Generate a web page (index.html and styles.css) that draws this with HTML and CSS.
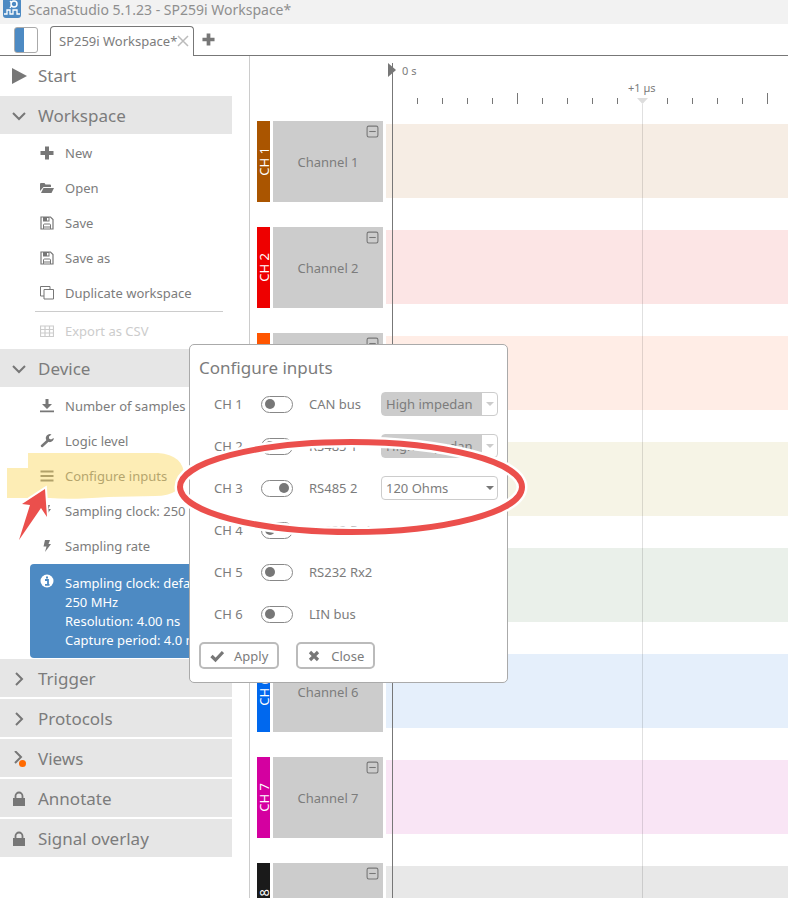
FILE: index.html
```html
<!DOCTYPE html>
<html lang="en">
<head>
    <meta charset="UTF-8">
    <meta name="viewport" content="width=device-width, initial-scale=1.0">
    <title>ScanaStudio 5.1.23 - SP259i Workspace*</title>
    <link rel="stylesheet" href="styles.css">
</head>
<body>
    <!-- shared icons -->
    <svg class="defs" width="0" height="0">
      <symbol id="down" viewBox="0 0 16 16"><path d="M2 5l6 6 6-6" fill="none" stroke="currentColor" stroke-width="2"/></symbol>
      <symbol id="right" viewBox="0 0 16 16"><path d="M5 2l6 6-6 6" fill="none" stroke="currentColor" stroke-width="2"/></symbol>
      <symbol id="lock" viewBox="0 0 16 16"><path d="M2 7h12v8H2z" fill="currentColor"/><path d="M4.500 8V5a3.500 3.500 0 0 1 7 0v3" fill="none" stroke="currentColor" stroke-width="1.800"/></symbol>
      <symbol id="plus" viewBox="0 0 14 14"><path d="M5 0.500h4V5h4.500v4H9v4.500H5V9H0.500V5H5z" fill="currentColor"/></symbol>
      <symbol id="save" viewBox="0 0 14 14"><path d="M1 1h9.500L13 3.500V13H1z" fill="none" stroke="currentColor" stroke-width="1.200"/><path d="M3 1h6.500v4.500H3z" fill="currentColor"/><path d="M7 2h1.500v2.500H7z" fill="#fff"/><path d="M3.500 13V9q0-1 1-1h5q1 0 1 1v4M3.500 11h7" fill="none" stroke="currentColor"/></symbol>
      <symbol id="bolt" viewBox="0 0 14 14"><path d="M5 1h5L8.500 5H11L5 13l1.500-5.500H3.500z" fill="currentColor"/></symbol>
      <symbol id="minus" viewBox="0 0 12 12"><rect x="1" y="1" width="10" height="10" rx="1.500" fill="none" stroke="currentColor"/><path d="M3 6h6" stroke="currentColor"/></symbol>
    </svg>

    <div class="app">
      <header class="titlebar">
        <svg class="logo" viewBox="0 0 18 18">
          <rect y="-2" width="18" height="20" rx="3" fill="#4d8ac3"/>
          <path d="M1 14h3v-4h3v4h3v-4h4v4h3M7 1l2 2M9 5L7 8" fill="none" stroke="#fff" stroke-width="1.300"/>
          <circle cx="11" cy="4" r="3" fill="none" stroke="#fff" stroke-width="1.500"/>
        </svg>
        <span>ScanaStudio 5.1.23 - SP259i Workspace*</span>
      </header>

      <nav class="tabbar">
        <button class="panel-toggle" aria-label="Toggle panel"></button>
        <div class="tab">
          <span>SP259i Workspace*</span>
          <button class="tab-close" aria-label="Close tab"><svg viewBox="0 0 12 12"><path d="M1 1l10 10M11 1L1 11" stroke="#bbb" stroke-width="1.500"/></svg></button>
        </div>
        <button class="tab-add" aria-label="New tab"><svg><use href="#plus"/></svg></button>
      </nav>

      <main class="main">
        <aside class="sidebar">
          <button class="head start"><svg viewBox="0 0 16 16"><path d="M1 0l15 8-15 8z" fill="currentColor"/></svg>Start</button>

          <button class="head"><svg><use href="#down"/></svg>Workspace</button>
          <div class="items">
            <button class="item"><svg><use href="#plus"/></svg>New</button>
            <button class="item"><svg viewBox="0 0 14 14"><path d="M0 10V3q0-1 1-1h3.500l1 1.500H10q1 0 1 1V6H3.500z" fill="currentColor"/><path d="M3.500 7H14l-2.500 5H1z" fill="currentColor"/></svg>Open</button>
            <button class="item"><svg><use href="#save"/></svg>Save</button>
            <button class="item"><svg><use href="#save"/></svg>Save as</button>
            <button class="item"><svg viewBox="0 0 14 14"><path d="M4 3.500h9.500v9.500H4zM4 10H0.500V0.500h9.500V3" fill="none" stroke="currentColor"/></svg>Duplicate workspace</button>
            <hr>
            <button class="item" disabled><svg viewBox="0 0 14 14"><path d="M0.500 2h13v10.500H0.500zM0 5.500h14M0 9h14M5 2v10.500M9.500 2v10.500" fill="none" stroke="currentColor" stroke-width="1.200"/></svg>Export as CSV</button>
          </div>

          <button class="head"><svg><use href="#down"/></svg>Device</button>
          <div class="items">
            <button class="item"><svg viewBox="0 0 14 14"><path d="M5.500 0h3v5H12L7 10 2 5h3.500zM0 11.500h14v1.800H0z" fill="currentColor"/></svg>Number of samples</button>
            <button class="item"><svg viewBox="0 0 14 14"><path d="M2 12L8 6.500" stroke="currentColor" stroke-width="2.500" stroke-linecap="round"/><path d="M11.500 0.500a4 4 0 1 0 2.300 3.500L11 5.500 9 4.500V2.500z" fill="currentColor"/></svg>Logic level</button>
            <button class="item"><svg viewBox="0 0 14 14"><path d="M0.500 2.500h13M0.500 7h13M0.500 11.500h13" stroke="currentColor" stroke-width="2"/></svg>Configure inputs</button>
            <button class="item"><svg><use href="#bolt"/></svg>Sampling clock: 250 MHz</button>
            <button class="item"><svg><use href="#bolt"/></svg>Sampling rate</button>
          </div>
          <div class="info">
            <svg viewBox="0 0 14 14"><circle cx="7" cy="7" r="6.500" fill="#fff"/><path d="M5 6h3v4.500M5 10.800h4.500M6 3.500h2" fill="none" stroke="#4d8ac3" stroke-width="1.800"/></svg>
            <p>Sampling clock: default 250 MHz<br>Resolution: 4.00 ns<br>Capture period: 4.0 ms</p>
          </div>

          <button class="head"><svg><use href="#right"/></svg>Trigger</button>
          <button class="head"><svg><use href="#right"/></svg>Protocols</button>
          <button class="head"><svg viewBox="0 0 16 16"><path d="M4 0l6 6-6 6" fill="none" stroke="currentColor" stroke-width="2"/><circle cx="11.500" cy="12.500" r="3.500" fill="#ff6a00"/></svg>Views</button>
          <button class="head"><svg><use href="#lock"/></svg>Annotate</button>
          <button class="head"><svg><use href="#lock"/></svg>Signal overlay</button>
        </aside>

        <section class="scope">
          <div class="ruler">
            <span class="zero">0 s</span>
            <span class="major">+1 µs</span>
            <div class="ticks" id="ticks"></div>
          </div>
          <div class="channels" id="channels"></div>
          <div class="line cursor"></div>
          <div class="line grid-line"></div>
        </section>
      </main>

      <form class="dialog" onsubmit="event.preventDefault()">
        <h2>Configure inputs</h2>
        <div class="inputs">
          <label for="in1">CH 1</label><input type="checkbox" id="in1"><span>CAN bus</span>
          <div class="pick"><select disabled aria-label="CAN bus termination"><option>High impedance</option></select></div>
          <label for="in2">CH 2</label><input type="checkbox" id="in2"><span>RS485 1</span>
          <div class="pick"><select disabled aria-label="RS485 1 termination"><option>High impedance</option></select></div>
          <label for="in3">CH 3</label><input type="checkbox" id="in3" checked><span>RS485 2</span>
          <div class="pick"><select aria-label="RS485 2 termination"><option>120 Ohms</option><option>High impedance</option></select></div>
          <label for="in4">CH 4</label><input type="checkbox" id="in4"><span>RS232 Rx1</span><i></i>
          <label for="in5">CH 5</label><input type="checkbox" id="in5"><span>RS232 Rx2</span><i></i>
          <label for="in6">CH 6</label><input type="checkbox" id="in6"><span>LIN bus</span><i></i>
        </div>
        <div class="actions">
          <button><svg viewBox="0 0 14 14"><path d="M1.500 7l4 4L13 3" fill="none" stroke="currentColor" stroke-width="3.200"/></svg>Apply</button>
          <button type="button"><svg viewBox="0 0 14 14"><path d="M3 3l8 8M11 3l-8 8" stroke="currentColor" stroke-width="3.200"/></svg>Close</button>
        </div>
      </form>

      <!-- marker notes drawn over the window -->
      <svg class="notes" width="540" height="560">
        <path class="marker" d="M28 453H158Q184 455 184 476Q182 496 155 496L108 497Q70 500 50 498H7V468H28z"/>
        <ellipse class="halo" cx="351" cy="487" rx="171" ry="45"/>
        <ellipse class="ring" cx="351" cy="487" rx="171" ry="45"/>
        <path class="arrow" d="M45 489L22 504L30 505L19 540L41 508L47 517z"/>
      </svg>
    </div>

    <script>
let channels = [
  { color: "#aa5500", band: "#f6ede4" },
  { color: "#ee0000", band: "#fce5e5" },
  { color: "#ff5500", band: "#ffede6" },
  { color: "#aa9900", band: "#f6f4e6" },
  { color: "#2f6b2f", band: "#eaf0ea" },
  { color: "#0068ee", band: "#e5effb" },
  { color: "#d400a0", band: "#f9e5f5" },
  { color: "#1a1a1a", band: "#e8e8e8" },
];

let rows = "";
channels.forEach(function (ch, index) {
  rows += `<div class="channel">
      <div class="strip" style="background:${ch.color}"><span>CH ${index + 1}</span></div>
      <div class="name">Channel ${index + 1}<button aria-label="Collapse"><svg><use href="#minus"/></svg></button></div>
      <div class="band" style="background:${ch.band}"></div>
    </div>`;
});
document.getElementById("channels").innerHTML = rows;

let ticks = "";
for (let i = 1; i < 80; i++) {
  let kind = i % 10 == 0 ? "mark" : i % 5 == 0 ? "tall" : "";
  ticks += `<i class="${kind}"></i>`;
}
document.getElementById("ticks").innerHTML = ticks;
    </script>
</body>
</html>
```
FILE: styles.css
```css
* {
  margin: 0;
  padding: 0;
  box-sizing: border-box;
}

body {
  font-family: "Noto Sans", sans-serif;
  font-size: 13px;
  color: #7c7c7c;
  background: #fff;
}

button {
  font: inherit;
  color: inherit;
  background: none;
  border: none;
}

svg {
  display: block;
  flex: none;
  color: #777;
}

.defs {
  position: absolute;
}

.app {
  position: relative;
  display: flex;
  flex-direction: column;
  height: 100vh;
  overflow: hidden;
}

/* title and tabs */
.titlebar {
  display: flex;
  gap: 7px;
  height: 24px;
  padding-left: 3px;
  background: #f2f2f2;
  color: #8f8f8f;
  font-size: 14px;
  line-height: 20px;
}

.logo {
  width: 18px;
  height: 18px;
}

.tabbar {
  display: flex;
  align-items: flex-end;
  height: 32px;
  padding-left: 14px;
  border-bottom: 1px solid #777;
}

.panel-toggle {
  width: 24px;
  height: 26px;
  margin: 0 12px 2px 0;
  border: 1px solid #aaa;
  border-radius: 3px;
  background: linear-gradient(to right, #4d8ac3 9px, #fff 9px);
}

.tab {
  display: flex;
  align-items: center;
  justify-content: space-between;
  width: 144px;
  height: 30px;
  margin-bottom: -1px;
  padding: 0 4px 2px 8px;
  border: 1px solid #777;
  border-bottom: none;
  border-radius: 4px 4px 0 0;
  background: #fff;
  white-space: nowrap;
}

.tab-close svg {
  width: 12px;
  height: 12px;
}

.tab-add {
  align-self: center;
  margin-left: 8px;
}

.tab-add svg {
  width: 13px;
  height: 13px;
}

.main {
  display: flex;
  flex: 1;
  min-height: 0;
}

/* sidebar */
.sidebar {
  display: flex;
  flex: none;
  flex-direction: column;
  width: 250px;
  padding-right: 17px;
  border-right: 1px solid #ccc;
}

.head {
  display: flex;
  flex: none;
  align-items: center;
  gap: 11px;
  height: 38px;
  margin-bottom: 2px;
  padding: 1px 0 0 11px;
  background: #e6e6e6;
  font-size: 17px;
}

.head svg {
  width: 16px;
  height: 16px;
}

.start {
  background: none;
}

.item {
  display: flex;
  align-items: center;
  gap: 11px;
  width: 100%;
  height: 35px;
  padding: 0 0 2px 40px;
  white-space: nowrap;
}

.item:disabled {
  color: #ccc;
}

.item:disabled svg {
  color: inherit;
}

.item svg,
.info svg {
  width: 14px;
  height: 14px;
}

hr {
  margin: 0 9px 2px 35px;
  border: none;
  border-top: 1px solid #ccc;
}

.info {
  display: flex;
  flex: none;
  gap: 11px;
  margin: 0 0 1px 30px;
  padding: 10px 8px 8px 10px;
  border-radius: 4px;
  background: #4d8ac3;
  color: #fff;
  line-height: 19px;
}

/* timeline */
.scope {
  position: relative;
  flex: 1;
  overflow: hidden;
}

.ruler {
  position: relative;
  height: 65px;
  padding-top: 42px;
  font-size: 11px;
  line-height: 16px;
}

.zero,
.major {
  position: absolute;
  top: 7px;
  left: 152px;
}

.major {
  top: 24px;
  left: 378px;
}

.ticks {
  display: flex;
  margin-left: 143px;
}

.ticks i {
  flex: none;
  width: 1px;
  height: 6px;
  margin-left: 24px;
  background: #777;
}

.ticks .tall {
  height: 11px;
  margin-top: -5px;
}

.ticks .mark {
  width: 11px;
  margin: 0 -5px 0 19px;
  background: #ddd;
  clip-path: polygon(0 0, 100% 0, 50% 100%);
}

.channel {
  display: flex;
  gap: 3px;
  height: 81px;
  margin: 0 0 25px 7px;
}

.strip {
  display: flex;
  align-items: center;
  justify-content: center;
  width: 13px;
  color: #fff;
}

.strip span {
  writing-mode: vertical-rl;
  transform: rotate(180deg);
}

.name {
  position: relative;
  display: flex;
  align-items: center;
  justify-content: center;
  width: 110px;
  background: #ccc;
}

.name button {
  position: absolute;
  top: 4px;
  right: 4px;
}

.name svg {
  width: 13px;
  height: 13px;
}

.band {
  flex: 1;
  margin: 3px 0 4px;
}

.line {
  position: absolute;
  top: 7px;
  bottom: 0;
  left: 142px;
  width: 1px;
  background: #777;
}

.cursor::before {
  content: "";
  position: absolute;
  left: -4px;
  border: solid transparent;
  border-width: 7px 0 7px 8px;
  border-left-color: #777;
}

.grid-line {
  top: 48px;
  left: 392px;
  background: rgba(0, 0, 0, 0.12);
}

/* inputs dialog */
.dialog {
  position: absolute;
  top: 344px;
  left: 189px;
  width: 319px;
  padding: 10px 9px 13px;
  border: 1px solid #aaa;
  border-radius: 5px;
  background: #fff;
}

.dialog h2 {
  font-size: 17px;
  font-weight: inherit;
  line-height: 26px;
}

.inputs {
  display: grid;
  grid-template-columns: 47px 48px 72px 117px;
  grid-auto-rows: 42px;
  align-items: center;
  padding: 2px 0 0 15px;
}

.inputs input {
  appearance: none;
  display: flex;
  align-items: center;
  width: 32px;
  height: 17px;
  padding: 0 3px;
  border: 1px solid #888;
  border-radius: 9px;
}

.inputs input::before {
  content: "";
  width: 10px;
  height: 10px;
  border-radius: 5px;
  background: #777;
}

.inputs input:checked {
  justify-content: flex-end;
}

.pick {
  position: relative;
}

.pick::after {
  content: "";
  position: absolute;
  top: 10px;
  right: 4px;
  border: 4px solid transparent;
  border-top-color: #777;
  border-bottom: none;
  pointer-events: none;
}

.pick select {
  display: block;
  appearance: none;
  width: 100%;
  height: 24px;
  padding: 0 24px 0 4px;
  border: 1px solid #ccc;
  border-radius: 4px;
  background: #fff;
  color: #7c7c7c;
  font: inherit;
}

.pick select:disabled {
  background: linear-gradient(to left, #fff 15px, #ccc 15px);
  opacity: 1;
}

.pick:has(:disabled)::after {
  border-top-color: #ccc;
}

.actions {
  display: flex;
  gap: 17px;
  margin-top: 7px;
}

.actions button {
  display: flex;
  align-items: center;
  gap: 10px;
  height: 27px;
  padding: 0 9px;
  border: 2px solid #bbb;
  border-radius: 5px;
}

.actions svg {
  width: 14px;
  height: 14px;
}

/* marker notes */
.notes {
  position: absolute;
  top: 0;
  left: 0;
  pointer-events: none;
}

.marker {
  fill: #fbd75b;
  fill-opacity: 0.45;
}

.halo {
  fill: none;
  stroke: #fff;
  stroke-width: 11;
}

.ring {
  fill: none;
  stroke: #eb4f4c;
  stroke-width: 6;
}

.arrow {
  fill: #eb4f4c;
  stroke: #fff;
  stroke-width: 4;
  paint-order: stroke;
}
```
